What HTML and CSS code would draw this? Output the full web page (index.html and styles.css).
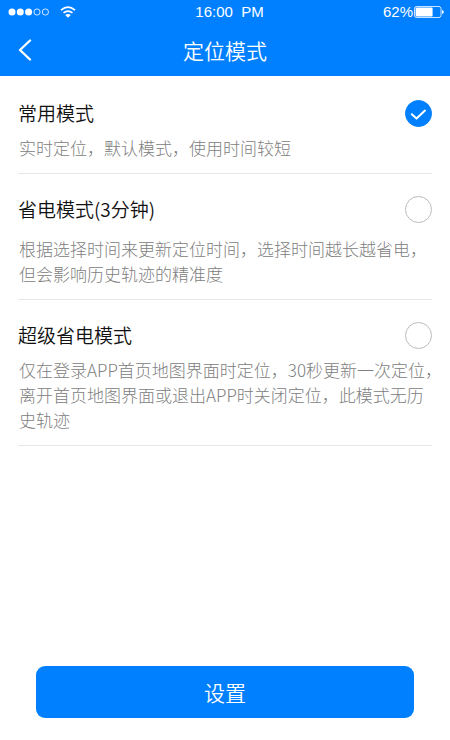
FILE: index.html
```html
<!DOCTYPE html>
<html lang="zh-CN">
<head>
<meta charset="utf-8">
<meta name="viewport" content="width=device-width, initial-scale=1">
<title>定位模式</title>
<link rel="stylesheet" href="styles.css">
</head>
<body>
<header class="header">
  <div class="status">
    <div class="status-left">
      <svg class="signal" width="42" height="10" viewBox="0 0 42 10" aria-hidden="true">
        <g fill="#fff"><circle cx="4" cy="5" r="3.5"/><circle cx="12.3" cy="5" r="3.5"/><circle cx="20.6" cy="5" r="3.5"/></g>
        <g fill="none" stroke="#fff" stroke-width=".8"><circle cx="29" cy="5" r="3.1"/><circle cx="37.4" cy="5" r="3.1"/></g>
      </svg>
      <svg class="wifi" width="16" height="12" viewBox="0 0 16 12" aria-hidden="true">
        <g fill="none" stroke="#fff" stroke-width="1.6">
          <path d="M1 4.1Q8 -1.7 15 4.1"/>
          <path d="M3.5 6.9Q8 3.2 12.5 6.9"/>
        </g>
        <path d="M5.2 9Q8 6.8 10.8 9L8 11.8Z" fill="#fff"/>
      </svg>
    </div>
    <span class="time">16:00&nbsp; PM</span>
    <div class="status-right">
      <span>62%</span>
      <svg width="30" height="12" viewBox="0 0 30 12" aria-hidden="true">
        <rect x=".5" y=".5" width="26.5" height="11" rx="2" fill="none" stroke="#fff" stroke-width=".8"/>
        <rect x="1.6" y="1.6" width="17" height="8.8" rx="1" fill="#fff"/>
        <path d="M28 4Q29.8 4.3 29.8 6T28 8Z" fill="#fff"/>
      </svg>
    </div>
  </div>
  <nav class="navbar">
    <button class="back" type="button" aria-label="返回">
      <svg width="14" height="22" viewBox="0 0 14 22" aria-hidden="true"><path d="M12 1.5L2 11L12 20.5" fill="none" stroke="#fff" stroke-width="2.4" stroke-linecap="round" stroke-linejoin="round"/></svg>
    </button>
    <h1 class="title">定位模式</h1>
  </nav>
</header>
<form class="form">
  <div class="modes">
    <div class="mode">
      <div class="mode-head">
        <label class="mode-name" for="normal">常用模式</label>
        <span class="radio">
          <input type="radio" id="normal" name="mode" checked>
          <svg class="tick" viewBox="0 0 27 27" aria-hidden="true"><path d="M6.8 14.2L11.5 18.6L20 10.6" fill="none" stroke="#fff" stroke-width="2" stroke-linecap="round" stroke-linejoin="round"/></svg>
        </span>
      </div>
      <p class="desc">实时定位，默认模式，使用时间较短</p>
    </div>
    <div class="mode spaced">
      <div class="mode-head">
        <label class="mode-name" for="saving">省电模式(3分钟)</label>
        <span class="radio"><input type="radio" id="saving" name="mode"></span>
      </div>
      <p class="desc">根据选择时间来更新定位时间，选择时间越长越省电，<br>但会影响历史轨迹的精准度</p>
    </div>
    <div class="mode">
      <div class="mode-head">
        <label class="mode-name" for="super">超级省电模式</label>
        <span class="radio"><input type="radio" id="super" name="mode"></span>
      </div>
      <p class="desc">仅在登录APP首页地图界面时定位，30秒更新一次定位，<br>离开首页地图界面或退出APP时关闭定位，此模式无历<br>史轨迹</p>
    </div>
  </div>
  <button class="submit" type="button">设置</button>
</form>
</body>
</html>
```
FILE: styles.css
```css
* { box-sizing: border-box; }

body {
  margin: 0;
  min-height: 100vh;
  display: flex;
  flex-direction: column;
  background: #fff;
  color: #111;
  font-family: "Noto Sans CJK SC", sans-serif;
  font-weight: 300;
}

.header {
  background: #0080ff;
  color: #fff;
}

.status {
  display: flex;
  justify-content: space-between;
  align-items: center;
  height: 23px;
  padding: 0 6px 0 8px;
  font-family: "Liberation Sans", sans-serif;
  font-size: 15px;
}

.status-left,
.status-right {
  display: flex;
  align-items: center;
}

.status-left { gap: 10px; }
.status-right { gap: 1px; }

.navbar {
  display: grid;
  grid-template-columns: 50px 1fr 50px;
  align-items: center;
  height: 53px;
}

.back {
  display: flex;
  justify-content: center;
  padding: 8px;
  border: 0;
  background: none;
}

.title {
  margin: 0;
  font-size: 21px;
  font-weight: 350;
  line-height: 32px;
  text-align: center;
}

.form {
  flex: 1;
  display: flex;
  flex-direction: column;
  justify-content: space-between;
  padding: 2px 0 22px;
}

.modes { padding: 0 18px; }

.mode {
  padding: 21px 0 13px;
  border-bottom: 1px solid #e6e6e6;
}

.mode-head {
  display: flex;
  justify-content: space-between;
  align-items: center;
  height: 28px;
}

.mode-name {
  font-size: 19px;
  font-weight: 350;
  line-height: 28px;
}

.radio {
  display: grid;
  width: 27px;
  height: 27px;
}

.radio > * { grid-area: 1 / 1; }

.radio input {
  appearance: none;
  width: 27px;
  height: 27px;
  margin: 0;
  border: 1px solid #bbb;
  border-radius: 50%;
}

.radio input:checked {
  border-color: #0080ff;
  background: #0080ff;
}

.tick {
  visibility: hidden;
  pointer-events: none;
}

input:checked + .tick { visibility: visible; }

.desc {
  margin: 8px 0 0 1px;
  color: #808080;
  font-size: 17px;
  line-height: 25px;
  white-space: nowrap;
}

.spaced .desc { margin-top: 13px; }

.submit {
  height: 52px;
  margin: 24px 36px 0;
  border: 0;
  border-radius: 9px;
  background: #0080ff;
  color: #fff;
  font-family: inherit;
  font-size: 21px;
  font-weight: 350;
}
```
